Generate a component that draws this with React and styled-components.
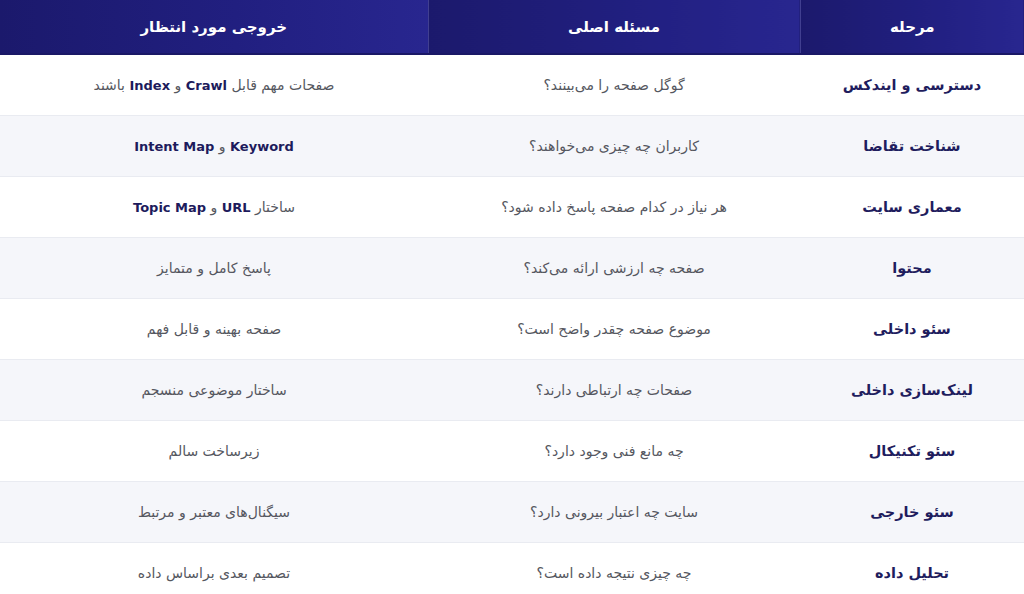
import React from "react";
import styled, { createGlobalStyle } from "styled-components";

const Global = createGlobalStyle`
  html, body { margin: 0; padding: 0; background: #ffffff; }
  body { font-family: "DejaVu Sans", "Noto Sans", sans-serif; }
`;

const Table = styled.table`
  width: 1024px;
  border-collapse: collapse;
  table-layout: fixed;
  direction: rtl;
  font-family: "DejaVu Sans", "Noto Sans", sans-serif;
`;

const HeadCell = styled.th`
  height: 53px;
  padding: 0;
  background: linear-gradient(to right, #1b196c 0%, #211f80 55%, #28268f 100%);
  color: #ffffff;
  font-size: 15px;
  font-weight: bold;
  text-align: center;
  border-left: 1px solid rgba(255, 255, 255, 0.14);
  border-bottom: 2px solid #1a1866;
  &:last-child { border-left: none; }
`;

const Row = styled.tr`
  background: ${(p) => (p.$alt ? "#f5f6fa" : "#ffffff")};
  border-bottom: 1px solid #e9ebf1;
`;

const StageCell = styled.td`
  height: 60px;
  padding: 0;
  text-align: center;
  color: #1f1d5e;
  font-size: 14.5px;
  font-weight: bold;
`;

const Cell = styled.td`
  height: 60px;
  padding: 0;
  text-align: center;
  color: #555760;
  font-size: 14px;
`;

const Strong = styled.b`
  color: #1d1b5c;
  font-weight: bold;
  font-size: 13px;
`;

const rows = [
  {
    stage: "دسترسی و ایندکس",
    q: "گوگل صفحه را می‌بینند؟",
    out: (
      <>
        صفحات مهم قابل <Strong>Crawl</Strong> و <Strong>Index</Strong> باشند
      </>
    ),
  },
  {
    stage: "شناخت تقاضا",
    q: "کاربران چه چیزی می‌خواهند؟",
    out: (
      <>
        <Strong>Keyword</Strong> و <Strong>Intent Map</Strong>
      </>
    ),
  },
  {
    stage: "معماری سایت",
    q: "هر نیاز در کدام صفحه پاسخ داده شود؟",
    out: (
      <>
        ساختار <Strong>URL</Strong> و <Strong>Topic Map</Strong>
      </>
    ),
  },
  { stage: "محتوا", q: "صفحه چه ارزشی ارائه می‌کند؟", out: "پاسخ کامل و متمایز" },
  { stage: "سئو داخلی", q: "موضوع صفحه چقدر واضح است؟", out: "صفحه بهینه و قابل فهم" },
  { stage: "لینک‌سازی داخلی", q: "صفحات چه ارتباطی دارند؟", out: "ساختار موضوعی منسجم" },
  { stage: "سئو تکنیکال", q: "چه مانع فنی وجود دارد؟", out: "زیرساخت سالم" },
  { stage: "سئو خارجی", q: "سایت چه اعتبار بیرونی دارد؟", out: "سیگنال‌های معتبر و مرتبط" },
  { stage: "تحلیل داده", q: "چه چیزی نتیجه داده است؟", out: "تصمیم بعدی براساس داده" },
];

export default function App() {
  return (
    <>
      <Global />
      <Table>
        <colgroup>
          <col style={{ width: 224 }} />
          <col style={{ width: 372 }} />
          <col style={{ width: 428 }} />
        </colgroup>
        <thead>
          <tr>
            <HeadCell>مرحله</HeadCell>
            <HeadCell>مسئله اصلی</HeadCell>
            <HeadCell>خروجی مورد انتظار</HeadCell>
          </tr>
        </thead>
        <tbody>
          {rows.map((r, i) => (
            <Row key={i} $alt={i % 2 === 1}>
              <StageCell>{r.stage}</StageCell>
              <Cell>{r.q}</Cell>
              <Cell>{r.out}</Cell>
            </Row>
          ))}
        </tbody>
      </Table>
    </>
  );
}
